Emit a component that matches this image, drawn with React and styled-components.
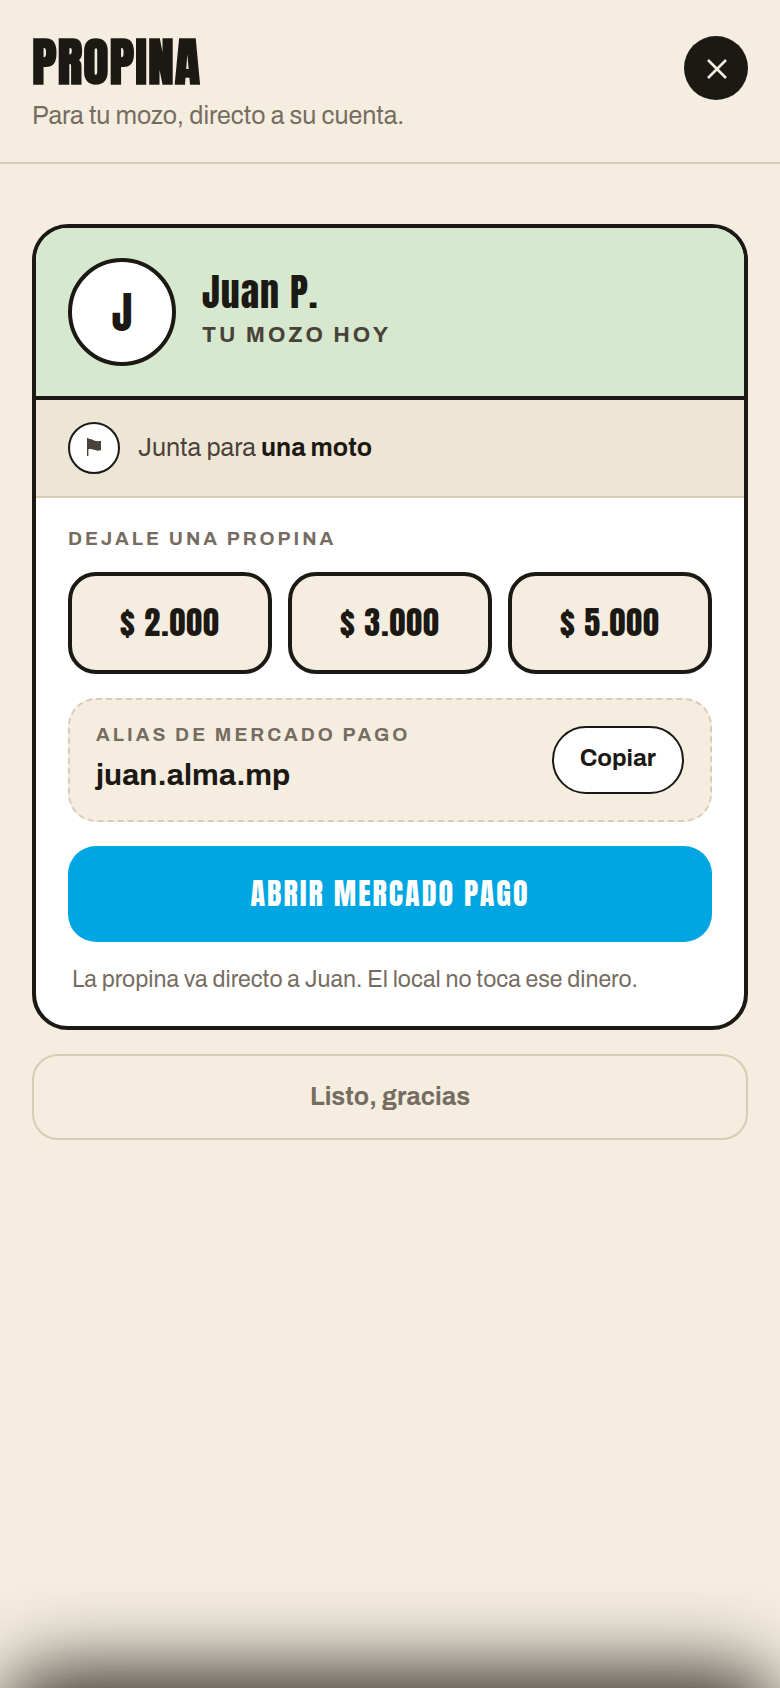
import React, { useState } from "react";
import styled, { createGlobalStyle, ThemeProvider } from "styled-components";

const theme = {
  colors: {
    ink: "#1c1814",
    inkSoft: "#4a423a",
    muted: "#766c61",
    cream: "#f5eee0",
    sand: "#eee6d5",
    line: "#d8ccb4",
    green: "#d6e8ce",
    white: "#ffffff",
    pago: "#00a6e2",
  },
  fonts: {
    display: 'Anton, Impact, "Liberation Sans", sans-serif',
    body: 'Archivo, "Liberation Sans", Arial, sans-serif',
  },
};

const amounts = ["2.000", "3.000", "5.000"];

const App = () => {
  const [amount, setAmount] = useState(null);
  const alias = "juan.alma.mp";

  return (
    <ThemeProvider theme={theme}>
      <GlobalStyle />
      <Page>
        <Header>
          <div>
            <Title>PROPINA</Title>
            <Subtitle>Para tu mozo, directo a su cuenta.</Subtitle>
          </div>
          <CloseButton type="button" aria-label="Cerrar">
            <svg width="22" height="22" viewBox="0 0 22 22" aria-hidden="true">
              <path
                d="M3 3L21 21M21 3L3 21"
                stroke="currentColor"
                strokeWidth="2.6"
              />
            </svg>
          </CloseButton>
        </Header>

        <Main>
          <Card>
            <Waiter>
              <Avatar>J</Avatar>
              <div>
                <Name>Juan P.</Name>
                <Role>TU MOZO HOY</Role>
              </div>
            </Waiter>

            <Goal>
              <GoalIcon>
                <svg width="14" height="20" viewBox="0 0 14 20" aria-hidden="true">
                  <path
                    d="M0 0H1.4V.8C4 1 5 1.600 7 2.400C9 3.200 11 3.300 14 3V12.200C11 13 9 12.600 7 11.800C5 11 3.500 10.800 1.400 11.200V18H0Z"
                    fill="currentColor"
                  />
                </svg>
              </GoalIcon>
              <p>
                Junta para <strong>una moto</strong>
              </p>
            </Goal>

            <Tip>
              <div>
                <Label>DEJALE UNA PROPINA</Label>
                <Amounts>
                  {amounts.map((value) => (
                    <AmountButton
                      key={value}
                      type="button"
                      aria-pressed={amount === value}
                      onClick={() => setAmount(value)}
                    >
                      $ {value}
                    </AmountButton>
                  ))}
                </Amounts>
              </div>

              <AliasBox>
                <div>
                  <Label>ALIAS DE MERCADO PAGO</Label>
                  <Alias>{alias}</Alias>
                </div>
                <CopyButton
                  type="button"
                  onClick={() => navigator.clipboard?.writeText(alias)}
                >
                  Copiar
                </CopyButton>
              </AliasBox>

              <PayLink href="#mercado-pago">ABRIR MERCADO PAGO</PayLink>
              <Note>La propina va directo a Juan. El local no toca ese dinero.</Note>
            </Tip>
          </Card>

          <DoneButton type="button">Listo, gracias</DoneButton>
        </Main>
        <SheetShadow />
      </Page>
    </ThemeProvider>
  );
};

const GlobalStyle = createGlobalStyle`
  *, *::before, *::after {
    box-sizing: border-box;
  }
  body {
    margin: 0;
    background: ${({ theme }) => theme.colors.cream};
    color: ${({ theme }) => theme.colors.ink};
    font-family: ${({ theme }) => theme.fonts.body};
  }
  h1, h2, p {
    margin: 0;
  }
  button {
    font-family: inherit;
    color: inherit;
    padding: 0;
    cursor: pointer;
  }
`;

const Page = styled.div`
  min-height: 100vh;
`;

const Header = styled.header`
  display: flex;
  justify-content: space-between;
  align-items: flex-start;
  padding: 36px 32px 30px;
  border-bottom: 2px solid ${({ theme }) => theme.colors.line};
`;

const Title = styled.h1`
  font-family: ${({ theme }) => theme.fonts.display};
  font-size: 52px;
  line-height: 52px;
  font-weight: 700;
  letter-spacing: 1px;
`;

const Subtitle = styled.p`
  margin-top: 12px;
  font-size: 25px;
  line-height: 32px;
  color: ${({ theme }) => theme.colors.muted};
`;

const CloseButton = styled.button`
  display: grid;
  place-items: center;
  width: 64px;
  height: 64px;
  border: none;
  border-radius: 50%;
  background: ${({ theme }) => theme.colors.ink};
  color: ${({ theme }) => theme.colors.cream};
`;

const Main = styled.main`
  display: flex;
  flex-direction: column;
  gap: 24px;
  padding: 60px 32px;
`;

const Card = styled.section`
  overflow: hidden;
  border: 4px solid ${({ theme }) => theme.colors.ink};
  border-radius: 36px;
  background: ${({ theme }) => theme.colors.white};
`;

const Waiter = styled.div`
  display: flex;
  align-items: center;
  gap: 26px;
  padding: 30px 32px;
  background: ${({ theme }) => theme.colors.green};
  border-bottom: 4px solid ${({ theme }) => theme.colors.ink};
`;

const Avatar = styled.div`
  display: grid;
  place-items: center;
  width: 108px;
  height: 108px;
  border: 4px solid ${({ theme }) => theme.colors.ink};
  border-radius: 50%;
  background: ${({ theme }) => theme.colors.white};
  font-family: ${({ theme }) => theme.fonts.display};
  font-size: 44px;
`;

const Name = styled.h2`
  font-family: ${({ theme }) => theme.fonts.display};
  font-size: 38px;
  line-height: 38px;
  font-weight: 400;
  letter-spacing: 1px;
`;

const Role = styled.p`
  margin-top: 8px;
  font-size: 22px;
  line-height: 32px;
  font-weight: 700;
  letter-spacing: 3px;
  color: ${({ theme }) => theme.colors.inkSoft};
`;

const Goal = styled.div`
  display: flex;
  align-items: center;
  gap: 18px;
  padding: 22px 32px;
  background: ${({ theme }) => theme.colors.sand};
  border-bottom: 2px solid ${({ theme }) => theme.colors.line};
  font-size: 25px;
  line-height: 32px;
  color: ${({ theme }) => theme.colors.inkSoft};
  strong {
    color: ${({ theme }) => theme.colors.ink};
  }
`;

const GoalIcon = styled.span`
  display: grid;
  place-items: center;
  width: 52px;
  height: 52px;
  border: 2px solid ${({ theme }) => theme.colors.ink};
  border-radius: 50%;
  background: ${({ theme }) => theme.colors.white};
`;

const Tip = styled.div`
  display: flex;
  flex-direction: column;
  gap: 24px;
  padding: 28px 32px 32px;
`;

const Label = styled.p`
  font-size: 19px;
  line-height: 26px;
  font-weight: 700;
  letter-spacing: 3px;
  color: ${({ theme }) => theme.colors.muted};
`;

const Amounts = styled.div`
  display: grid;
  grid-template-columns: repeat(3, 1fr);
  gap: 16px;
  margin-top: 20px;
`;

const AmountButton = styled.button`
  height: 102px;
  padding-bottom: 2px;
  border: 4px solid ${({ theme }) => theme.colors.ink};
  border-radius: 28px;
  background: ${({ theme }) => theme.colors.cream};
  font-family: ${({ theme }) => theme.fonts.display};
  font-size: 32px;
  letter-spacing: 1px;
`;

const AliasBox = styled.div`
  display: flex;
  justify-content: space-between;
  align-items: center;
  padding: 22px 26px;
  border: 2px dashed ${({ theme }) => theme.colors.line};
  border-radius: 28px;
  background: ${({ theme }) => theme.colors.cream};
`;

const Alias = styled.p`
  margin-top: 4px;
  font-size: 30px;
  line-height: 46px;
  font-weight: 700;
`;

const CopyButton = styled.button`
  height: 68px;
  padding: 0 26px 4px;
  border: 2px solid ${({ theme }) => theme.colors.ink};
  border-radius: 34px;
  background: ${({ theme }) => theme.colors.white};
  font-size: 24px;
  font-weight: 700;
`;

const PayLink = styled.a`
  display: grid;
  place-items: center;
  height: 96px;
  padding-bottom: 2px;
  border-radius: 28px;
  background: ${({ theme }) => theme.colors.pago};
  color: ${({ theme }) => theme.colors.white};
  font-family: ${({ theme }) => theme.fonts.display};
  font-size: 30px;
  letter-spacing: 2px;
  text-decoration: none;
`;

const Note = styled.p`
  padding: 0 4px;
  font-size: 23px;
  line-height: 28px;
  color: ${({ theme }) => theme.colors.muted};
`;

const DoneButton = styled.button`
  height: 86px;
  padding-bottom: 2px;
  border: 2px solid ${({ theme }) => theme.colors.line};
  border-radius: 26px;
  background: transparent;
  font-size: 25px;
  font-weight: 700;
  color: ${({ theme }) => theme.colors.muted};
`;

/* shadow of the sheet that waits below the viewport */
const SheetShadow = styled.div`
  position: fixed;
  top: 100%;
  left: 0;
  right: 0;
  height: 400px;
  border-radius: 56px;
  box-shadow: 0 -20px 76px rgba(28, 24, 20, 0.85);
  pointer-events: none;
`;

export default App;
